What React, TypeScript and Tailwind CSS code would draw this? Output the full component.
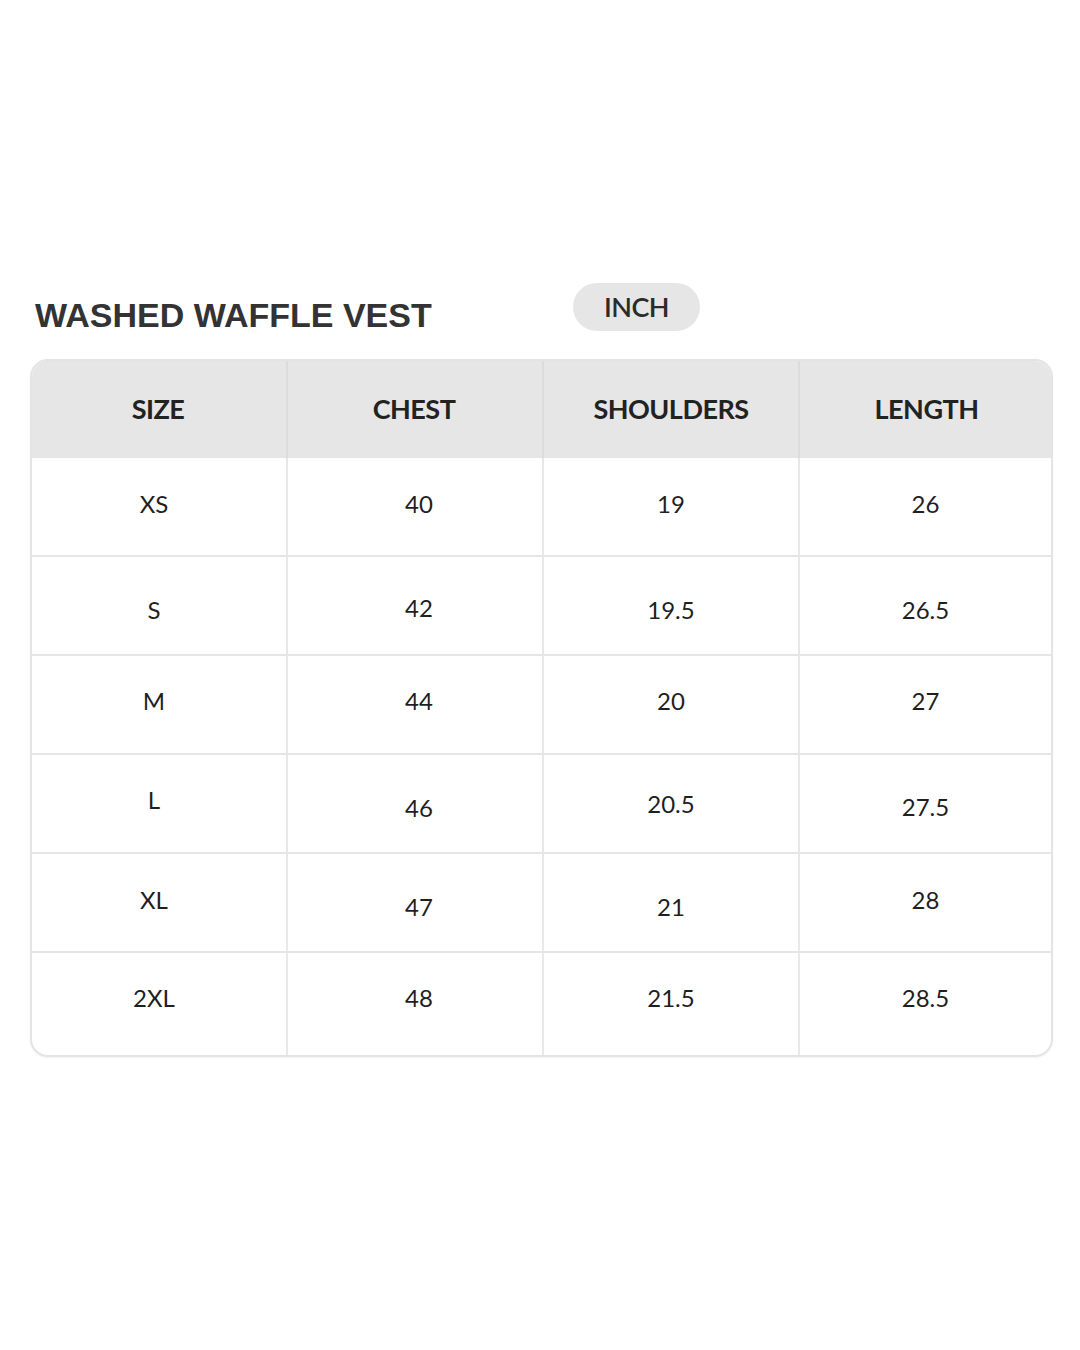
import React from "react";

const rows: [string, string, string, string, number[]][] = [
  ["XS", "40", "19", "26", [-3, -3, -3, -3]],
  ["S", "42", "19.5", "26.5", [4, 2, 4, 4]],
  ["M", "44", "20", "27", [-4, -4, -4, -4]],
  ["L", "46", "20.5", "27.5", [-4, 4, 0, 3]],
  ["XL", "47", "21", "28", [-3, 4, 4, -3]],
  ["2XL", "48", "21.5", "28.5", [-6, -6, -6, -6]],
];

const headers = ["SIZE", "CHEST", "SHOULDERS", "LENGTH"];
const hx = [-1, -1, 0, 1];
const bx = [-5, 4, 0, 0];

export default function App() {
  return (
    <div className="w-[1080px] h-[1350px] bg-white pt-[283px] px-[30px]" style={{ fontFamily: "Lato, 'Liberation Sans', sans-serif" }}>
      <div className="flex items-start h-[48px]">
        <div className="w-[543px] pl-[5px] pt-[12px] text-[34px] leading-[40px] font-bold text-[#333333]" style={{ fontFamily: "'Liberation Sans', Arial, sans-serif" }}>
          WASHED WAFFLE VEST
        </div>
        <div className="w-[127px] h-[48px] rounded-full bg-[#e6e6e6] flex items-center justify-center text-[27px] font-semibold text-[#2b2b2b] tracking-[-0.5px]">
          INCH
        </div>
      </div>
      <div className="mt-[28px] w-[1023px] rounded-[18px] border-2 border-[#e4e4e4] overflow-hidden shadow-[0_1px_2px_rgba(0,0,0,0.06)]">
        <div className="grid grid-cols-[256px_256px_256px_1fr] h-[97px] bg-[#e6e6e6]">
          {headers.map((h, i) => (
            <div key={h} className={`flex items-center justify-center text-[27px] font-bold text-[#222222] tracking-[-0.5px] ${i < 3 ? "border-r-2 border-[#dcdcdc]" : ""}`}>
              <span style={{ transform: `translateX(${hx[i]}px)` }}>{h}</span>
            </div>
          ))}
        </div>
        {rows.map((r, ri) => (
          <div key={r[0]} className={`grid grid-cols-[256px_256px_256px_1fr] ${ri === 5 ? "h-[102px]" : "h-[99px]"} ${ri < 5 ? "border-b-2 border-[#e6e6e6]" : ""}`}>
            {r.slice(0, 4).map((c, ci) => (
              <div key={ci} className={`flex items-center justify-center text-[24px] text-[#1f1f1f] ${ci < 3 ? "border-r-2 border-[#e8e8e8]" : ""}`}>
                <span style={{ transform: `translate(${bx[ci]}px, ${(r[4] as number[])[ci]}px)` }}>{c as string}</span>
              </div>
            ))}
          </div>
        ))}
      </div>
    </div>
  );
}
